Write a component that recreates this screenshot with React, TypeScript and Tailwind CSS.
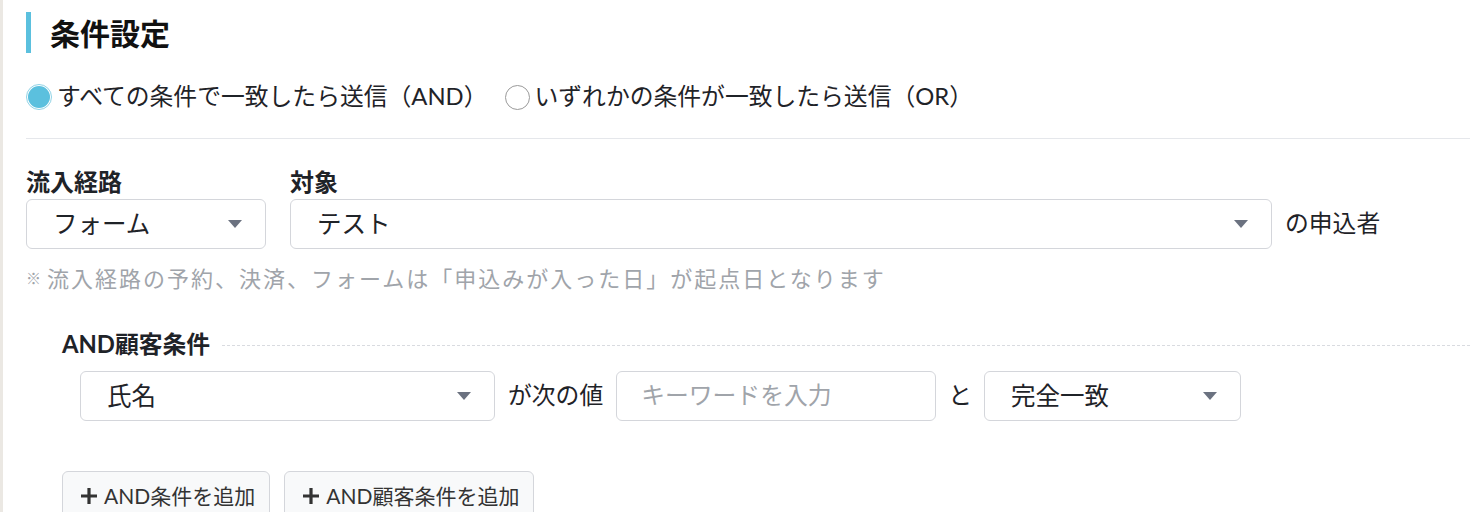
const font = "font-['Lato','Noto_Sans_CJK_JP',sans-serif]";

const Caret = () => (
  <svg width="14" height="8" viewBox="0 0 14 8" className="shrink-0">
    <path d="M0 0 L14 0 L7 8 Z" fill="#6b7280" />
  </svg>
);

const Select = ({ value, className }: { value: string; className: string }) => (
  <div
    className={`flex h-[50px] items-center justify-between rounded-[6px] border border-[#d4d6db] bg-white pl-[26px] pr-[23px] text-[24.5px] text-[#1f2328] ${className}`}
  >
    <span>{value}</span>
    <Caret />
  </div>
);

const Radio = ({ checked, label }: { checked: boolean; label: string }) => (
  <label className="flex items-center gap-[5px]">
    {checked ? (
      <span className="flex h-[26px] w-[26px] items-center justify-center rounded-full border border-[#8fd3e6] bg-white">
        <span className="h-[22px] w-[22px] rounded-full bg-[#5bc0de]" />
      </span>
    ) : (
      <span className="h-[25px] w-[25px] rounded-full border border-[#9a9a9a] bg-white" />
    )}
    <span>{label}</span>
  </label>
);

const Plus = () => (
  <svg width="18" height="18" viewBox="0 0 18 18" className="shrink-0">
    <path d="M9 1 V17 M1 9 H17" stroke="#333" strokeWidth="3.2" />
  </svg>
);

const AddButton = ({ label }: { label: string }) => (
  <button className="flex h-[50px] items-center gap-[6px] rounded-[6px] border border-[#d4d6db] bg-[#f8f9fa] pl-[17px] pr-[14px] text-[21px] text-[#333]">
    <Plus />
    <span>{label}</span>
  </button>
);

export default function App() {
  return (
    <div className={`h-[512px] overflow-hidden border-l-[3px] border-[#ebe8e3] bg-white pl-[23px] text-[#1f2328] ${font}`}>
      <div className="mt-[12px] flex h-[41px] items-center border-l-[5px] border-[#5bc0de] pl-[19px] text-[30px] font-bold leading-none text-[#111]">
        条件設定
      </div>

      <div className="mt-[29px] flex h-[30px] items-center gap-[17px] text-[23.8px]">
        <Radio checked label="すべての条件で一致したら送信（AND）" />
        <Radio checked={false} label="いずれかの条件が一致したら送信（OR）" />
      </div>

      <div className="mt-[26px] border-t border-[#e5e7eb]" />

      <div className="mt-[29px] flex items-end gap-[24px]">
        <div className="flex flex-col gap-[3px]">
          <div className="h-[28px] text-[24px] font-bold leading-[28px]">流入経路</div>
          <Select value="フォーム" className="w-[240px]" />
        </div>
        <div className="flex flex-col gap-[3px]">
          <div className="h-[28px] text-[24px] font-bold leading-[28px]">対象</div>
          <Select value="テスト" className="w-[982px]" />
        </div>
        <div className="ml-[-11px] flex h-[50px] items-center text-[23.8px]">の申込者</div>
      </div>

      <div className="mt-[14px] flex h-[30px] items-center text-[22px] tracking-[2px] text-[#a0a4aa]">
        <span className="mr-[4px] text-[15px]">※</span>
        流入経路の予約、決済、フォームは「申込みが入った日」が起点日となります
      </div>

      <div className="ml-[36px] mt-[38px] flex h-[28px] items-center gap-[12px]">
        <span className="text-[23.8px] font-bold">AND顧客条件</span>
        <div className="flex-1 border-t border-dashed border-[#d9dbe0]" />
      </div>

      <div className="ml-[54px] mt-[12px] flex items-center text-[23.8px]">
        <Select value="氏名" className="w-[415px]" />
        <span className="mx-[13px]">が次の値</span>
        <div className="flex h-[50px] w-[320px] items-center rounded-[6px] border border-[#d4d6db] pl-[24px] text-[#a0a4aa]">
          キーワードを入力
        </div>
        <span className="mx-[12px]">と</span>
        <Select value="完全一致" className="w-[257px]" />
      </div>

      <div className="ml-[36px] mt-[50px] flex gap-[14px]">
        <AddButton label="AND条件を追加" />
        <AddButton label="AND顧客条件を追加" />
      </div>
    </div>
  );
}
